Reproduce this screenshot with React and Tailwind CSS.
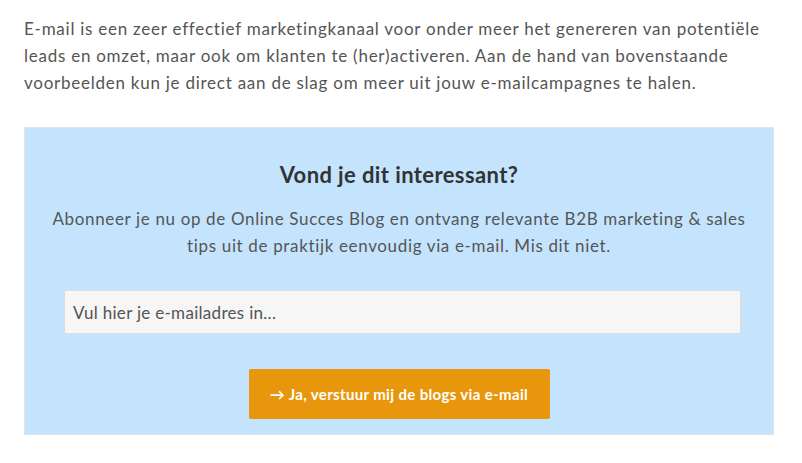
import React from 'react'

export default function App() {
  return (
    <div className="w-[802px] h-[463px] bg-white font-['Lato',sans-serif] text-[#555]">
      <div className="pl-6 pr-7 pt-[15px]">
        <p className="text-[17px] leading-[27px] tracking-[0.75px]">
          E-mail is een zeer effectief marketingkanaal voor onder meer het genereren van potentiële
          <br />
          leads en omzet, maar ook om klanten te (her)activeren. Aan de hand van bovenstaande
          <br />
          voorbeelden kun je direct aan de slag om meer uit jouw e-mailcampagnes te halen.
        </p>

        {/* Nieuwsbrief blok */}
        <div className="mt-[31px] w-[750px] h-[308px] bg-[#c4e4fd] border border-[#e3e3e3] flex flex-col items-center">
          <h3 className="mt-[33px] text-[22px] leading-[28px] font-bold tracking-[0.4px] text-[#333]">
            Vond je dit interessant?
          </h3>
          <p className="mt-[16px] text-center text-[17px] leading-[27px] tracking-[0.65px]">
            Abonneer je nu op de Online Succes Blog en ontvang relevante B2B marketing &amp; sales
            <br />
            tips uit de praktijk eenvoudig via e-mail. Mis dit niet.
          </p>
          <div className="self-stretch mt-[31px] pl-[39px] pr-[32px]">
            <input
              type="text"
              placeholder="Vul hier je e-mailadres in..."
              className="w-full h-[44px] bg-[#f6f6f6] border border-[#dcdcdc] px-2 text-[17px] tracking-[0.3px] placeholder:text-[#555] outline-none"
            />
          </div>
          <button className="mt-[35px] h-[50px] w-[301px] rounded-[2px] bg-[#e8960c] text-white text-[15px] font-bold tracking-[0.35px]">
            → Ja, verstuur mij de blogs via e-mail
          </button>
        </div>
      </div>
    </div>
  )
}
